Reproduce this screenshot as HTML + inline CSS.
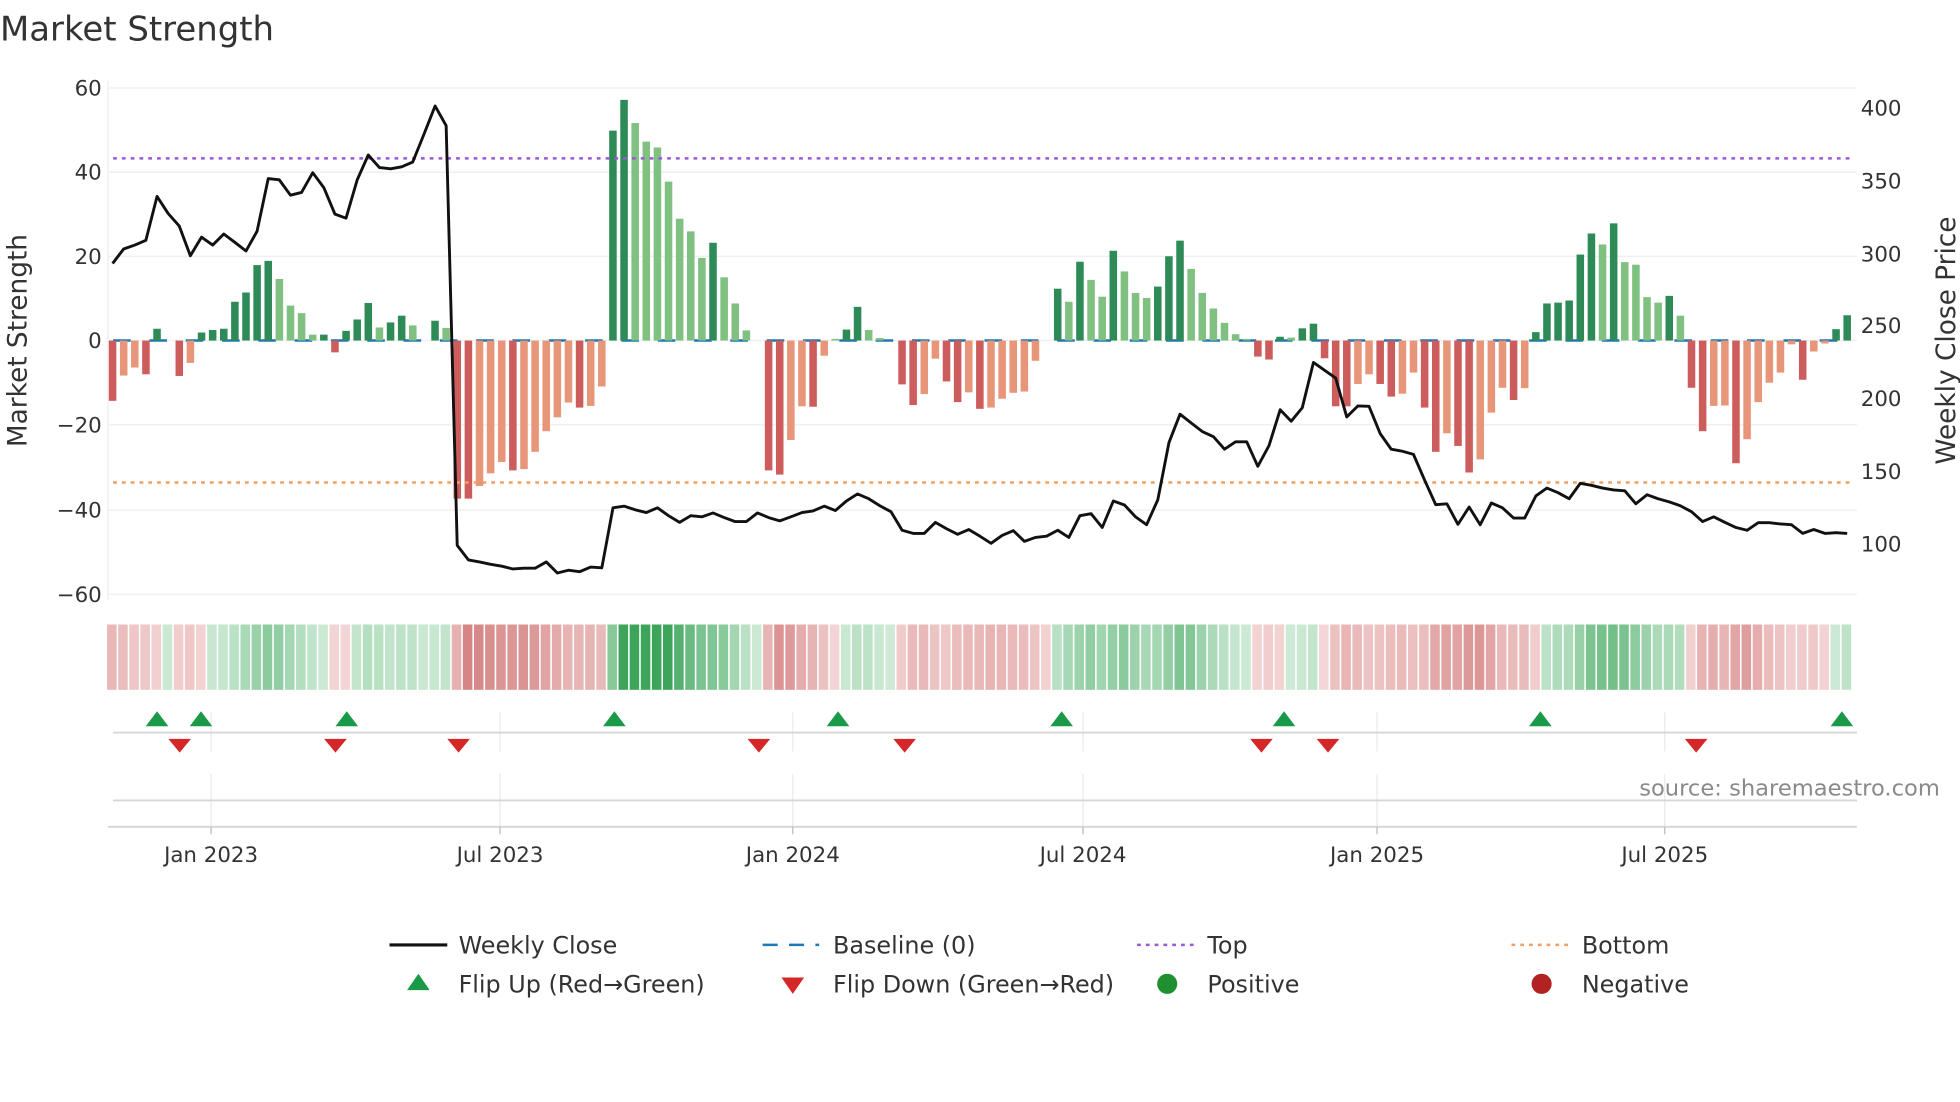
<!DOCTYPE html>
<html><head><meta charset="utf-8"><style>
html,body{margin:0;padding:0;background:#fff;}
svg{display:block;}
text{font-family:"DejaVu Sans","Liberation Sans",sans-serif;fill:#333;}
</style></head><body>
<svg id="s" width="1960" height="1102" viewBox="0 0 1560 877" xmlns="http://www.w3.org/2000/svg">
<rect width="1560" height="877" fill="#fff"/>
<text x="0" y="32" font-size="27" fill="#333">Market Strength</text>
<g id="grid" stroke="#eef0f2" stroke-width="1.2">
<line x1="86" x2="1478" y1="70" y2="70"/><line x1="86" x2="1478" y1="137" y2="137"/>
<line x1="86" x2="1478" y1="204" y2="204"/><line x1="86" x2="1478" y1="271" y2="271"/>
<line x1="86" x2="1478" y1="338" y2="338"/><line x1="86" x2="1478" y1="406" y2="406"/>
<line x1="86" x2="1478" y1="473" y2="473"/>
<line x1="86" x2="86" y1="64" y2="478"/>
</g>
<g font-size="17" text-anchor="end">
<text x="81" y="76">60</text><text x="81" y="143">40</text><text x="81" y="210">20</text>
<text x="81" y="277">0</text><text x="81" y="344">−20</text><text x="81" y="412">−40</text>
<text x="81" y="479">−60</text>
</g>
<g font-size="17">
<text x="1481" y="92">400</text><text x="1481" y="150">350</text><text x="1481" y="208">300</text>
<text x="1481" y="265">250</text><text x="1481" y="323">200</text><text x="1481" y="381">150</text>
<text x="1481" y="439">100</text>
</g>
<text transform="translate(21,271) rotate(-90)" font-size="21" text-anchor="middle">Market Strength</text>
<text transform="translate(1556,271) rotate(-90)" font-size="21" text-anchor="middle">Weekly Close Price</text>
<line x1="90" x2="1476" y1="271" y2="271" stroke="#1f77b4" stroke-width="2" stroke-dasharray="14 14.9"/>
<g id="bars"></g>
<line x1="90" x2="1476" y1="126" y2="126" stroke="#9b59d6" stroke-width="2" stroke-dasharray="3 4"/>
<line x1="90" x2="1476" y1="384" y2="384" stroke="#f0a060" stroke-width="2" stroke-dasharray="3 4"/>
<polyline id="price" fill="none" stroke="#111" stroke-width="2.3" stroke-linejoin="round"/>
<g id="heat"></g>
<g stroke="#e8eaed" stroke-width="1">
<line x1="168" x2="168" y1="567" y2="598"/><line x1="398" x2="398" y1="567" y2="598"/>
<line x1="631" x2="631" y1="567" y2="598"/><line x1="862" x2="862" y1="567" y2="598"/>
<line x1="1096" x2="1096" y1="567" y2="598"/><line x1="1325" x2="1325" y1="567" y2="598"/>
<line x1="168" x2="168" y1="616" y2="658"/><line x1="398" x2="398" y1="616" y2="658"/>
<line x1="631" x2="631" y1="616" y2="658"/><line x1="862" x2="862" y1="616" y2="658"/>
<line x1="1096" x2="1096" y1="616" y2="658"/><line x1="1325" x2="1325" y1="616" y2="658"/>
</g>
<line x1="90" x2="1478" y1="583" y2="583" stroke="#d4d6d9" stroke-width="1.5"/>
<line x1="90" x2="1478" y1="637" y2="637" stroke="#d4d6d9" stroke-width="1.5"/>
<line x1="86" x2="1478" y1="658" y2="658" stroke="#d4d6d9" stroke-width="1.5"/>
<g stroke="#bbb" stroke-width="1">
<line x1="168" x2="168" y1="658" y2="664"/><line x1="398" x2="398" y1="658" y2="664"/>
<line x1="631" x2="631" y1="658" y2="664"/><line x1="862" x2="862" y1="658" y2="664"/>
<line x1="1096" x2="1096" y1="658" y2="664"/><line x1="1325" x2="1325" y1="658" y2="664"/>
</g>
<g id="marks"></g>
<g font-size="17" text-anchor="middle">
<text x="168" y="686">Jan 2023</text><text x="398" y="686">Jul 2023</text>
<text x="631" y="686">Jan 2024</text><text x="862" y="686">Jul 2024</text>
<text x="1096" y="686">Jan 2025</text><text x="1325" y="686">Jul 2025</text>
</g>
<text x="1544" y="633" font-size="18" text-anchor="end" fill="#8a8a8a" style="fill:#8a8a8a">source: sharemaestro.com</text>
<g font-size="19">
<line x1="310" x2="356" y1="752" y2="752" stroke="#111" stroke-width="2.5"/><text x="365" y="759">Weekly Close</text>
<line x1="607" x2="652" y1="752" y2="752" stroke="#1f77b4" stroke-width="2" stroke-dasharray="12 9"/><text x="663" y="759">Baseline (0)</text>
<line x1="905" x2="950" y1="752" y2="752" stroke="#9b59d6" stroke-width="2" stroke-dasharray="3 4"/><text x="961" y="759">Top</text>
<line x1="1203" x2="1248" y1="752" y2="752" stroke="#f0a060" stroke-width="2" stroke-dasharray="3 4"/><text x="1259" y="759">Bottom</text>
<polygon points="324,788 342,788 333,775" fill="#1a9a48"/><text x="365" y="790">Flip Up (Red→Green)</text>
<polygon points="622,778 640,778 631,791" fill="#d62728"/><text x="663" y="790">Flip Down (Green→Red)</text>
<circle cx="929" cy="783" r="8" fill="#1f8f2f"/><text x="961" y="790">Positive</text>
<circle cx="1227" cy="783" r="8" fill="#b22222"/><text x="1259" y="790">Negative</text>
</g>
</svg>
<script>
var V=[[-14.3,1],[-8.3,0],[-6.4,0],[-8,1],[2.8,1],[0,0],[-8.4,1],[-5.3,0],[1.9,1],[2.5,1],[2.8,1],[9.2,1],[11.4,1],[17.9,1],[18.9,1],[14.6,0],[8.3,0],[6.5,0],[1.4,0],[1.4,1],[-2.8,1],[2.3,1],[5,1],[8.9,1],[3.1,0],[4.3,1],[5.9,1],[3.6,0],[0,0],[4.7,1],[3,0],
[-37.5,1],[-37.5,1],[-34.5,0],[-31.5,0],[-28.8,0],[-30.8,1],[-30.5,0],[-26.4,0],[-21.5,0],[-18.2,0],[-14.7,0],[-15.9,1],[-15.5,0],[-10.9,0],
[49.8,1],[57.1,1],[51.6,0],[47.2,0],[45.8,0],[37.7,0],[28.9,0],[25.9,0],[19.6,0],[23.2,1],[15,0],[8.8,0],[2.4,0],[0,0],
[-30.8,1],[-31.8,1],[-23.6,0],[-15.6,0],[-15.7,1],[-3.6,0],[0.4,0],[2.6,1],[8,1],[2.5,0],[0.6,0],[0,0],
[-10.4,1],[-15.3,1],[-12.7,0],[-4.3,0],[-9.7,1],[-14.6,1],[-12.3,0],[-16.2,1],[-15.9,0],[-13.8,0],[-12.4,0],[-12.1,0],[-4.8,0],[0,0],
[12.3,1],[9.2,0],[18.7,1],[14.4,0],[10.4,0],[21.3,1],[16.4,0],[11.3,0],[10.1,0],[12.8,1],[20,1],[23.7,1],[17,0],[11.3,0],[7.6,0],[4.2,0],[1.5,0],[0.4,0],
[-3.8,1],[-4.5,1],[0.9,1],[0.7,0],[2.9,1],[4,1],
[-4.2,1],[-15.6,1],[-15.6,1],[-10.3,0],[-8,0],[-10.3,1],[-13.3,1],[-12.6,0],[-7.6,0],[-15.9,1],[-26.4,1],[-22,0],[-25,1],[-31.3,1],[-28.2,0],[-17.1,0],[-11.2,0],[-14.1,1],[-11.3,0],
[2,1],[8.8,1],[9,1],[9.5,1],[20.4,1],[25.4,1],[22.8,0],[27.8,1],[18.6,0],[18,0],[10.3,0],[9,0],[10.6,1],[5.9,0],
[-11.2,1],[-21.5,1],[-15.5,0],[-15.4,0],[-29.1,1],[-23.4,0],[-14.6,0],[-10,0],[-7.6,0],[-0.9,0],[-9.3,1],[-2.6,0],[-0.7,0],[2.7,1],[6,1]];
var P=[667,630,620,608,497,540,572,647,600,620,592,613,635,585,452,455,494,487,437,475,542,552,455,392,424,427,422,410,340,268,318,1380,1417,1422,1428,1433,1440,1438,1438,1422,1450,1443,1447,1435,1437,1285,1281,1290,1297,1285,1305,1322,1305,1308,1298,1310,1320,1320,1298,1310,1318,1308,1297,1293,1281,1292,1268,1250,1262,1280,1295,1342,1350,1350,1322,1338,1352,1340,1357,1375,1355,1343,1370,1360,1357,1342,1360,1305,1300,1335,1268,1278,1308,1328,1265,1120,1048,1070,1092,1105,1137,1118,1118,1180,1128,1037,1066,1032,917,937,957,1055,1027,1028,1097,1137,1142,1150,1215,1277,1275,1327,1283,1328,1273,1285,1311,1311,1255,1235,1247,1262,1223,1228,1235,1240,1242,1275,1252,1262,1270,1280,1295,1320,1308,1322,1335,1342,1323,1323,1326,1328,1350,1340,1350,1348,1350];
var NS="http://www.w3.org/2000/svg";
function el(t,a,p){var e=document.createElementNS(NS,t);for(var k in a)e.setAttribute(k,a[k]);p.appendChild(e);return e;}
var bars=document.getElementById('bars'),heat=document.getElementById('heat'),marks=document.getElementById('marks');
var sp=8.85,x0=89.6,u=3.355;
var pts=[];
for(var i=0;i<V.length;i++){
 var v=V[i][0],d=V[i][1],cx=x0+sp*i;
 var c=v>=0?(d?'#2e8b57':'#80c080'):(d?'#cd5c5c':'#e8967a');
 if(Math.abs(v)>0.05){var h=Math.abs(v)*u;el('rect',{x:cx-3,y:v>=0?271-h:271,width:6,height:h,fill:c},bars);}
 pts.push(cx.toFixed(1)+','+(P[i]/3.18).toFixed(1));
 var s=0,n=0;for(var j=Math.max(0,i-1);j<=i;j++){s+=V[j][0];n++;}s/=n;
 var t=Math.min(1,Math.abs(s)/40),col;
 if(s>=0){var a=[207,235,215],b=[60,165,90];col='rgb('+a.map(function(q,k){return Math.round(q+(b[k]-q)*t)}).join(',')+')';}
 else{var a=[244,214,214],b=[212,128,128];col='rgb('+a.map(function(q,k){return Math.round(q+(b[k]-q)*t)}).join(',')+')';}
 el('rect',{x:cx-4.4,y:497,width:7.6,height:52,fill:col},heat);
}
document.getElementById('price').setAttribute('points',pts.join(' '));
[125,160,276,489,667,845,1022,1226,1466].forEach(function(x){el('polygon',{points:(x-9)+',578 '+(x+9)+',578 '+x+',566',fill:'#1a9a48'},marks);});
[143,267,365,604,720,1004,1057,1350].forEach(function(x){el('polygon',{points:(x-9)+',588 '+(x+9)+',588 '+x+',599',fill:'#d62728'},marks);});
</script>
</body></html>
